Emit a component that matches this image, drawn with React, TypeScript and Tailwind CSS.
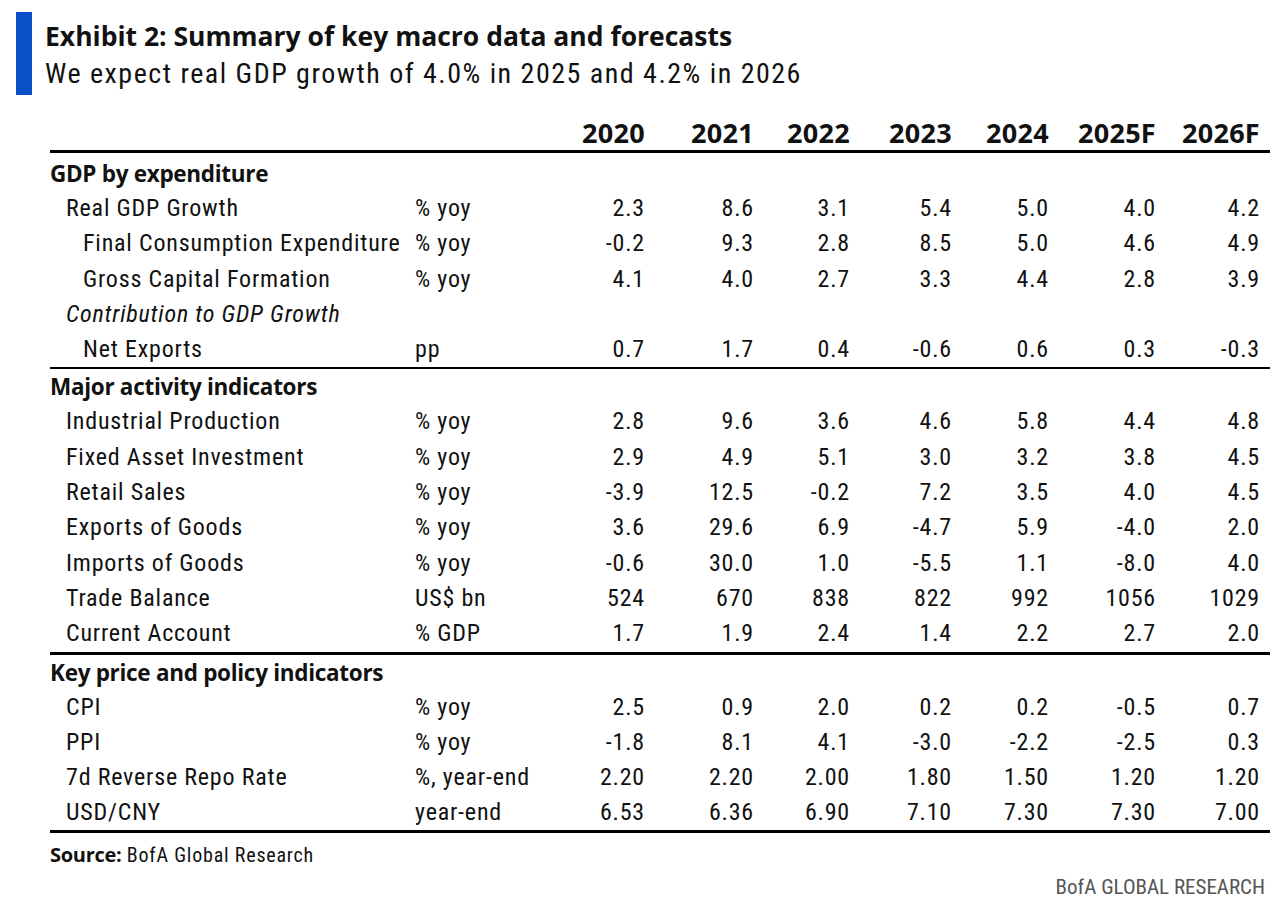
type Row = {
  label: string;
  unit?: string;
  level: 1 | 2;
  italic?: boolean;
  values?: string[];
};

type Section = {
  title: string;
  headClass: string;
  rowClass: string;
  rows: Row[];
  lineClass: string;
};

const years = ["2020", "2021", "2022", "2023", "2024", "2025F", "2026F"];

const sections: Section[] = [
  {
    title: "GDP by expenditure",
    headClass: "mt-[3px]",
    rowClass: "h-[35.3px]",
    lineClass: "h-[2px]",
    rows: [
      { label: "Real GDP Growth", unit: "% yoy", level: 1, values: ["2.3", "8.6", "3.1", "5.4", "5.0", "4.0", "4.2"] },
      { label: "Final Consumption Expenditure", unit: "% yoy", level: 2, values: ["-0.2", "9.3", "2.8", "8.5", "5.0", "4.6", "4.9"] },
      { label: "Gross Capital Formation", unit: "% yoy", level: 2, values: ["4.1", "4.0", "2.7", "3.3", "4.4", "2.8", "3.9"] },
      { label: "Contribution to GDP Growth", level: 1, italic: true },
      { label: "Net Exports", unit: "pp", level: 2, values: ["0.7", "1.7", "0.4", "-0.6", "0.6", "0.3", "-0.3"] },
    ],
  },
  {
    title: "Major activity indicators",
    headClass: "",
    rowClass: "h-[35.3px]",
    lineClass: "h-[3px]",
    rows: [
      { label: "Industrial Production", unit: "% yoy", level: 1, values: ["2.8", "9.6", "3.6", "4.6", "5.8", "4.4", "4.8"] },
      { label: "Fixed Asset Investment", unit: "% yoy", level: 1, values: ["2.9", "4.9", "5.1", "3.0", "3.2", "3.8", "4.5"] },
      { label: "Retail Sales", unit: "% yoy", level: 1, values: ["-3.9", "12.5", "-0.2", "7.2", "3.5", "4.0", "4.5"] },
      { label: "Exports of Goods", unit: "% yoy", level: 1, values: ["3.6", "29.6", "6.9", "-4.7", "5.9", "-4.0", "2.0"] },
      { label: "Imports of Goods", unit: "% yoy", level: 1, values: ["-0.6", "30.0", "1.0", "-5.5", "1.1", "-8.0", "4.0"] },
      { label: "Trade Balance", unit: "US$ bn", level: 1, values: ["524", "670", "838", "822", "992", "1056", "1029"] },
      { label: "Current Account", unit: "% GDP", level: 1, values: ["1.7", "1.9", "2.4", "1.4", "2.2", "2.7", "2.0"] },
    ],
  },
  {
    title: "Key price and policy indicators",
    headClass: "",
    rowClass: "h-[35px]",
    lineClass: "h-[3px]",
    rows: [
      { label: "CPI", unit: "% yoy", level: 1, values: ["2.5", "0.9", "2.0", "0.2", "0.2", "-0.5", "0.7"] },
      { label: "PPI", unit: "% yoy", level: 1, values: ["-1.8", "8.1", "4.1", "-3.0", "-2.2", "-2.5", "0.3"] },
      { label: "7d Reverse Repo Rate", unit: "%, year-end", level: 1, values: ["2.20", "2.20", "2.00", "1.80", "1.50", "1.20", "1.20"] },
      { label: "USD/CNY", unit: "year-end", level: 1, values: ["6.53", "6.36", "6.90", "7.10", "7.30", "7.30", "7.00"] },
    ],
  },
];

const gridCols =
  "grid w-[1210px] grid-cols-[365px_140px_90px_109px_96px_102px_97px_107px_104px]";

// police étroite pour le corps, Open Sans gras pour les titres
const body = "font-['Roboto_Condensed',sans-serif] tracking-[0.8px]";
const bold = "font-['Open_Sans',sans-serif] font-bold";

function clsx(...parts: (string | false | undefined)[]) {
  return parts.filter(Boolean).join(" ");
}

function DataRow({ row, className }: { row: Row; className: string }) {
  return (
    <div className={`${gridCols} ${body} ${className} text-[24px] leading-[35px]`}>
      <div
        className={clsx(
          "whitespace-nowrap",
          row.level === 1 ? "pl-[16px]" : "pl-[33px]",
          row.italic && "italic"
        )}
      >
        {row.label}
      </div>
      <div className="whitespace-nowrap">{row.unit ?? ""}</div>
      {(row.values ?? years.map(() => "")).map((v, i) => (
        <div key={i} className="text-right">
          {v}
        </div>
      ))}
    </div>
  );
}

export default function App() {
  return (
    <div className="min-h-screen bg-white text-[#111]">
      {/* titre */}
      <div className="flex pt-3 pl-4">
        <div className="w-4 h-[83px] bg-[#0b50c6]" />
        <div className="ml-[13px] pt-[8px]">
          <h1 className={`${bold} text-[26.5px] leading-[32px]`}>
            Exhibit 2: Summary of key macro data and forecasts
          </h1>
          <p className={`${body} mt-[5px] text-[28px] leading-[34px] tracking-[1.5px]`}>
            We expect real GDP growth of 4.0% in 2025 and 4.2% in 2026
          </p>
        </div>
      </div>

      {/* tableau */}
      <div className="ml-[50px] w-[1220px] mt-[20px]">
        <div className={`${gridCols} ${bold} h-[35px] text-[27px] leading-[35px] tracking-[0.3px]`}>
          <div />
          <div />
          {years.map((y) => (
            <div key={y} className="text-right">
              {y}
            </div>
          ))}
        </div>
        <div className="h-[3px] bg-black" />

        {sections.map((s) => (
          <div key={s.title}>
            <div className={`${s.headClass} ${bold} h-[35px] text-[22.5px] leading-[35px] tracking-[-0.3px] whitespace-nowrap`}>
              {s.title}
            </div>
            {s.rows.map((r) => (
              <DataRow key={r.label} row={r} className={s.rowClass} />
            ))}
            <div className={`${s.lineClass} bg-black`} />
          </div>
        ))}

        <div className={`${body} mt-[8px] text-[20px] leading-[28px] tracking-[0.4px]`}>
          <span className={`${bold} text-[20px] tracking-[-0.3px]`}>Source:</span> BofA Global Research
        </div>
        <div className={`${body} w-[1215px] mt-[4px] flex justify-end text-[21px] leading-[28px] tracking-[0px] text-[#555]`}>
          BofA GLOBAL RESEARCH
        </div>
      </div>
    </div>
  );
}
